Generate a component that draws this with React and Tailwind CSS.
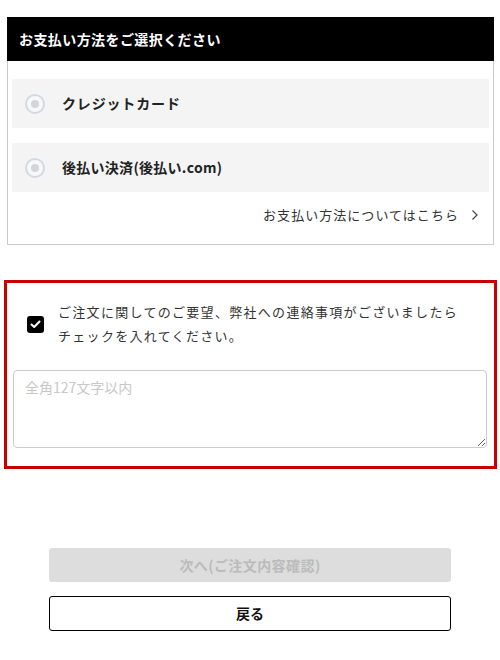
import React from "react";

function Radio() {
  return (
    <svg width="20" height="20" viewBox="0 0 20 20" className="shrink-0">
      <circle cx="10" cy="10" r="9" fill="#f7f8f9" stroke="#d3dadf" strokeWidth="2" />
      <circle cx="10" cy="10" r="4" fill="#d3d6d9" />
    </svg>
  );
}

export default function App() {
  const font = { fontFamily: '"Noto Sans CJK JP", "Noto Sans", sans-serif' };
  return (
    <div className="w-[500px] h-[660px] bg-white pt-[17px] text-[#222]" style={font}>
      <div className="ml-[7px] w-[487px]">
        <div className="h-[44px] bg-black flex items-center pl-[12px]">
          <span className="text-white text-[14px] font-bold tracking-[0.03em]">お支払い方法をご選択ください</span>
        </div>
        <div className="border border-t-0 border-[#cccccc] pt-[18px] px-[4px] pb-[19px]">
          <div className="flex flex-col gap-[15px]">
            <div className="h-[49px] bg-[#f4f4f4] flex items-center pl-[13px]">
              <Radio />
              <span className="ml-[17px] text-[14px] font-bold tracking-[0.06em]">クレジットカード</span>
            </div>
            <div className="h-[49px] bg-[#f4f4f4] flex items-center pl-[13px]">
              <Radio />
              <span className="ml-[17px] text-[14px] font-bold tracking-[0.02em]">後払い決済(後払い.com)</span>
            </div>
          </div>
          <div className="flex items-center justify-end pr-[10px] mt-[13px] h-[20px]">
            <span className="text-[13px] tracking-[0.08em] text-[#333]">お支払い方法についてはこちら</span>
            <svg width="8" height="12" viewBox="0 0 8 12" className="ml-[12px]">
              <polyline points="1.5,1.5 6,6 1.5,10.5" fill="none" stroke="#444" strokeWidth="1.2" />
            </svg>
          </div>
        </div>
      </div>

      <div className="ml-[4px] mt-[35px] w-[493px] border-[3px] border-[#c80000] pt-[17px] px-[6px] pb-[18px]">
        <div className="flex items-center pl-[14px]">
          <div className="w-[17px] h-[17px] bg-black rounded-[3px] flex items-center justify-center shrink-0">
            <svg width="11" height="9" viewBox="0 0 11 9">
              <polyline points="1.5,4.5 4.2,7 9.5,1.5" fill="none" stroke="white" strokeWidth="2" strokeLinecap="round" strokeLinejoin="round" />
            </svg>
          </div>
          <p className="ml-[14px] text-[13px] leading-[24px] tracking-[0.1em] text-[#333]">
            ご注文に関してのご要望、弊社への連絡事項がございましたら<br />チェックを入れてください。
          </p>
        </div>
        <textarea
          className="mt-[22px] block w-[474px] h-[78px] border border-[#cccccc] rounded-[4px] px-[11px] py-[6px] text-[14px] placeholder:text-[#c8c8c8] outline-none resize-y"
          placeholder="全角127文字以内"
          style={font}
        />
      </div>

      <div className="ml-[49px] w-[402px] mt-[79px] flex flex-col gap-[14px]">
        <div className="h-[34px] bg-[#dddddd] rounded-[3px] flex items-center justify-center">
          <span className="text-[14px] font-bold text-[#bbbbbb] tracking-[0.03em]">次へ(ご注文内容確認)</span>
        </div>
        <div className="h-[35px] border-[1.5px] border-black rounded-[3px] flex items-center justify-center">
          <span className="text-[14px] font-bold text-[#111]">戻る</span>
        </div>
      </div>
    </div>
  );
}
